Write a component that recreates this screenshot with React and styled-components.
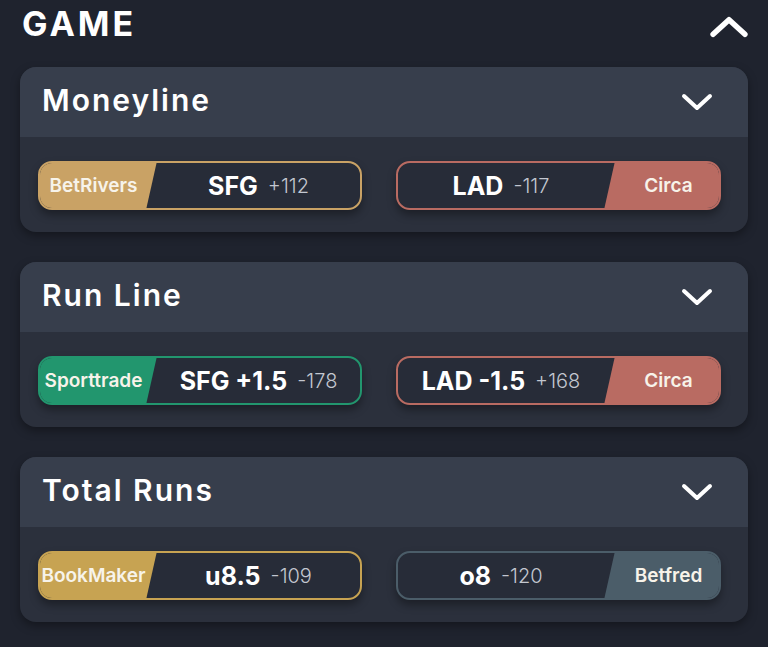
import React from "react";
import styled, { createGlobalStyle } from "styled-components";

const GlobalStyle = createGlobalStyle`
  html, body {
    margin: 0;
    padding: 0;
    background: #1f232e;
  }
  body {
    font-family: "Inter", "Open Sans", "Noto Sans", sans-serif;
    color: #ffffff;
  }
`;

const markets = [
  {
    title: "Moneyline",
    left: { book: "BetRivers", color: "#c9a265", main: "SFG", odds: "+112" },
    right: { book: "Circa", color: "#b96b62", main: "LAD", odds: "-117" },
  },
  {
    title: "Run Line",
    left: { book: "Sporttrade", color: "#22966e", main: "SFG +1.5", odds: "-178" },
    right: { book: "Circa", color: "#b96b62", main: "LAD -1.5", odds: "+168" },
  },
  {
    title: "Total Runs",
    left: { book: "BookMaker", color: "#c7a352", main: "u8.5", odds: "-109" },
    right: { book: "Betfred", color: "#4b5d69", main: "o8", odds: "-120" },
  },
];

function Chevron({ up, size = 32, stroke = 4 }) {
  return (
    <svg width={size} height={size / 2 + 2} viewBox="0 0 32 18" fill="none">
      <path
        d={up ? "M3 15 L16 3 L29 15" : "M3 3 L16 15 L29 3"}
        stroke="#ffffff"
        strokeWidth={stroke}
        strokeLinecap="round"
        strokeLinejoin="round"
      />
    </svg>
  );
}

function Pill({ side, book, color, main, odds }) {
  const label = (
    <BookLabel $color={color} $side={side}>
      {book}
    </BookLabel>
  );
  return (
    <PillBox $color={color}>
      {side === "left" && label}
      <Odds>
        <Main>{main}</Main>
        <Price>{odds}</Price>
      </Odds>
      {side === "right" && label}
    </PillBox>
  );
}

export default function App() {
  return (
    <Page>
      <GlobalStyle />
      <TopBar>
        <Heading>GAME</Heading>
        <ToggleIcon>
          <Chevron up size={40} stroke={4.5} />
        </ToggleIcon>
      </TopBar>
      <Stack>
        {markets.map((m) => (
          <Card key={m.title}>
            <CardHeader>
              <CardTitle>{m.title}</CardTitle>
              <Chevron size={32} stroke={4} />
            </CardHeader>
            <CardBody>
              <Pill side="left" {...m.left} />
              <Pill side="right" {...m.right} />
            </CardBody>
          </Card>
        ))}
      </Stack>
    </Page>
  );
}

const Page = styled.div`
  width: 768px;
  height: 647px;
  box-sizing: border-box;
  padding: 0 20px;
  overflow: hidden;
`;

const TopBar = styled.div`
  height: 67px;
  display: flex;
  align-items: flex-start;
  justify-content: space-between;
  padding: 0 0 0 2px;
`;

const Heading = styled.h1`
  margin: 0;
  padding-top: 4px;
  font-size: 34px;
  line-height: 40px;
  font-weight: 700;
  letter-spacing: 3px;
`;

const ToggleIcon = styled.div`
  padding-top: 16px;
  margin-right: -1px;
`;

const Stack = styled.div`
  display: flex;
  flex-direction: column;
  gap: 30px;
`;

const Card = styled.div`
  border-radius: 16px;
  overflow: hidden;
  background: #2b303c;
  box-shadow: 0 4px 10px rgba(0, 0, 0, 0.35);
`;

const CardHeader = styled.div`
  height: 70px;
  background: #373e4c;
  display: flex;
  align-items: center;
  justify-content: space-between;
  padding: 0 35px 0 22px;
`;

const CardTitle = styled.h2`
  margin: 0;
  margin-top: -5px;
  font-size: 30px;
  font-weight: 600;
  letter-spacing: 2px;
`;

const CardBody = styled.div`
  display: grid;
  grid-template-columns: 324px 325px;
  column-gap: 34px;
  padding: 24px 27px 22px 18px;
`;

const PillBox = styled.div`
  height: 49px;
  box-sizing: border-box;
  display: flex;
  align-items: stretch;
  border: 2px solid ${(p) => p.$color};
  border-radius: 14px;
  background: #272c38;
  overflow: hidden;
  box-shadow: 0 5px 8px rgba(0, 0, 0, 0.35);
`;

const BookLabel = styled.div`
  flex: 0 0 ${(p) => (p.$side === "left" ? "119px" : "117px")};
  display: flex;
  align-items: center;
  justify-content: center;
  box-sizing: border-box;
  margin: -2px;
  ${(p) => (p.$side === "left" ? "margin-right: 0;" : "margin-left: 0;")}
  background: ${(p) => p.$color};
  clip-path: ${(p) =>
    p.$side === "left"
      ? "polygon(0 0, 100% 0, calc(100% - 11px) 100%, 0 100%)"
      : "polygon(11px 0, 100% 0, 100% 100%, 0 100%)"};
  padding: ${(p) => (p.$side === "left" ? "0 10px 0 2px" : "0 0 0 12px")};
  font-size: 19px;
  font-weight: 600;
  color: #f7f3ea;
  white-space: nowrap;
`;

const Odds = styled.div`
  flex: 1;
  display: flex;
  align-items: center;
  justify-content: center;
  gap: 10px;
  white-space: nowrap;
`;

const Main = styled.span`
  font-size: 25px;
  font-weight: 700;
  color: #ffffff;
`;

const Price = styled.span`
  font-size: 20px;
  font-weight: 300;
  color: #c3c7d0;
`;
